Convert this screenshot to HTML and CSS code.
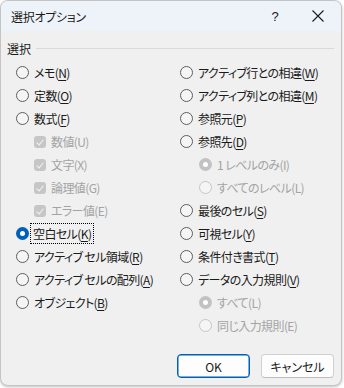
FILE: index.html
```html
<!doctype html>
<html lang="ja">
  <head>
    <meta charset="UTF-8" />
    <title>選択オプション</title>
    <link rel="stylesheet" href="styles.css">
  </head>
  <body>
    <div class="dialog">
      <header class="titlebar">
        <span class="title">選択オプション</span>
        <span class="help">?</span>
        <span class="close">
          <svg width="12" height="12" viewBox="0 0 12 12"><path d="M0.5 0.5 L11.5 11.5 M11.5 0.5 L0.5 11.5" stroke="#1a1a1a" stroke-width="1.1" fill="none"/></svg>
        </span>
      </header>

      <div class="content">
        <div class="group-head">
          <span class="group-label">選択</span>
          <span class="group-rule"></span>
        </div>

        <div class="columns">
          <div class="column col-left">
            <div class="row"><span class="radio"></span><span class="label">メモ(<u>N</u>)</span></div>
            <div class="row"><span class="radio"></span><span class="label">定数(<u>O</u>)</span></div>
            <div class="row"><span class="radio"></span><span class="label">数式(<u>F</u>)</span></div>
            <div class="row sub disabled"><span class="check"></span><span class="label">数値(U)</span></div>
            <div class="row sub disabled"><span class="check"></span><span class="label">文字(X)</span></div>
            <div class="row sub disabled"><span class="check"></span><span class="label">論理値(G)</span></div>
            <div class="row sub disabled"><span class="check"></span><span class="label">エラー値(E)</span></div>
            <div class="row"><span class="radio on"></span><span class="label focus">空白セル(<u>K</u>)</span></div>
            <div class="row"><span class="radio"></span><span class="label">アクティブ セル領域(<u>R</u>)</span></div>
            <div class="row"><span class="radio"></span><span class="label">アクティブ セルの配列(<u>A</u>)</span></div>
            <div class="row"><span class="radio"></span><span class="label">オブジェクト(<u>B</u>)</span></div>
          </div>

          <div class="column col-right">
            <div class="row"><span class="radio"></span><span class="label">アクティブ行との相違(<u>W</u>)</span></div>
            <div class="row"><span class="radio"></span><span class="label">アクティブ列との相違(<u>M</u>)</span></div>
            <div class="row"><span class="radio"></span><span class="label">参照元(<u>P</u>)</span></div>
            <div class="row"><span class="radio"></span><span class="label">参照先(<u>D</u>)</span></div>
            <div class="row sub disabled"><span class="radio on"></span><span class="label">1 レベルのみ(I)</span></div>
            <div class="row sub disabled"><span class="radio"></span><span class="label">すべてのレベル(L)</span></div>
            <div class="row"><span class="radio"></span><span class="label">最後のセル(<u>S</u>)</span></div>
            <div class="row"><span class="radio"></span><span class="label">可視セル(<u>Y</u>)</span></div>
            <div class="row"><span class="radio"></span><span class="label">条件付き書式(<u>T</u>)</span></div>
            <div class="row"><span class="radio"></span><span class="label">データの入力規則(<u>V</u>)</span></div>
            <div class="row sub disabled"><span class="radio on"></span><span class="label">すべて(L)</span></div>
            <div class="row sub disabled"><span class="radio"></span><span class="label">同じ入力規則(E)</span></div>
          </div>
        </div>

        <div class="buttons">
          <button class="btn btn-default">OK</button>
          <button class="btn">キャンセル</button>
        </div>
      </div>
    </div>
  </body>
</html>
```

FILE: styles.css
```css
:root {
  --text-color: #1a1a1a;
  --disabled-color: #a3a3a3;
  --accent-color: #005fb8;
  --body-color: #f0f0f0;
  --title-color: #eef3f9;
}

* {
  margin: 0;
  padding: 0;
  box-sizing: border-box;
}

body {
  width: 344px;
  height: 388px;
  background-color: #ffffff;
  font-family: "Noto Sans CJK JP", sans-serif;
  font-size: 12px;
  font-feature-settings: "palt";
  color: var(--text-color);
  overflow: hidden;
}

.dialog {
  width: 342px;
  height: 386px;
  border: 1px solid #c4c4c4;
  border-radius: 8px;
  background-color: var(--body-color);
  box-shadow: 0 1px 3px rgba(0, 0, 0, 0.25);
  overflow: hidden;
}

.titlebar {
  height: 30px;
  display: flex;
  align-items: center;
  background-color: var(--title-color);
  padding-left: 10px;
}

.title {
  flex: 1;
  font-size: 12px;
  letter-spacing: -0.3px;
}

.help {
  width: 46px;
  text-align: center;
  font-family: "Liberation Sans", sans-serif;
  font-size: 13px;
  padding-left: 6px;
}

.close {
  width: 46px;
  height: 30px;
  display: flex;
  align-items: center;
  justify-content: center;
}

.content {
  padding: 8px 7px 0 6px;
}

.group-head {
  height: 18px;
  display: flex;
  align-items: center;
  gap: 5px;
}

.group-label {
  font-size: 12px;
}

.group-rule {
  flex: 1;
  height: 1px;
  background-color: #d9d9d9;
}

.columns {
  display: flex;
  margin-top: 4px;
  padding-left: 9px;
}

.col-left {
  width: 164px;
}

.col-right {
  flex: 1;
}

.row {
  height: 23px;
  display: flex;
  align-items: center;
  gap: 5px;
  white-space: nowrap;
}

.row.sub {
  padding-left: 18px;
}

.col-right .row.sub {
  padding-left: 19px;
}

.row.disabled {
  color: var(--disabled-color);
}

.label {
  line-height: 18px;
  padding-top: 1px;
  letter-spacing: -0.6px;
}

.label u {
  text-underline-offset: 2px;
}

.focus {
  outline: 1px dotted #000;
  outline-offset: 0;
  padding: 1px 2px 0;
  margin-left: -3px;
  margin-right: -3px;
  line-height: 18px;
}

.radio {
  width: 13px;
  height: 13px;
  flex: none;
  border-radius: 50%;
  border: 1px solid #5e5e5e;
  background-color: #f5f5f5;
  position: relative;
}

.radio.on {
  border: none;
  background-color: var(--accent-color);
}

.radio.on::after {
  content: "";
  position: absolute;
  left: 4px;
  top: 4px;
  width: 5px;
  height: 5px;
  border-radius: 50%;
  background-color: #ffffff;
}

.disabled .radio {
  border-color: #c6c6c6;
  background-color: #f5f5f5;
}

.disabled .radio.on {
  background-color: #c2c2c2;
}

.check {
  width: 12px;
  height: 12px;
  flex: none;
  border-radius: 3px;
  background-color: #c6c6c6;
  position: relative;
}

.check::after {
  content: "";
  position: absolute;
  left: 4px;
  top: 2px;
  width: 3px;
  height: 6px;
  border-right: 1px solid #f3f3f3;
  border-bottom: 1px solid #f3f3f3;
  transform: rotate(40deg);
}

.buttons {
  display: flex;
  justify-content: flex-end;
  gap: 11px;
  margin-top: 17px;
}

.btn {
  width: 73px;
  height: 24px;
  border: 1px solid #d0d0d0;
  border-bottom-color: #bdbdbd;
  border-radius: 4px;
  background-color: #fdfdfd;
  font-family: "Noto Sans CJK JP", sans-serif;
  font-size: 12px;
  font-feature-settings: "palt";
  color: var(--text-color);
}

.btn-default {
  border: 1px solid var(--accent-color);
  box-shadow: inset 0 0 0 0.5px var(--accent-color);
}
```
